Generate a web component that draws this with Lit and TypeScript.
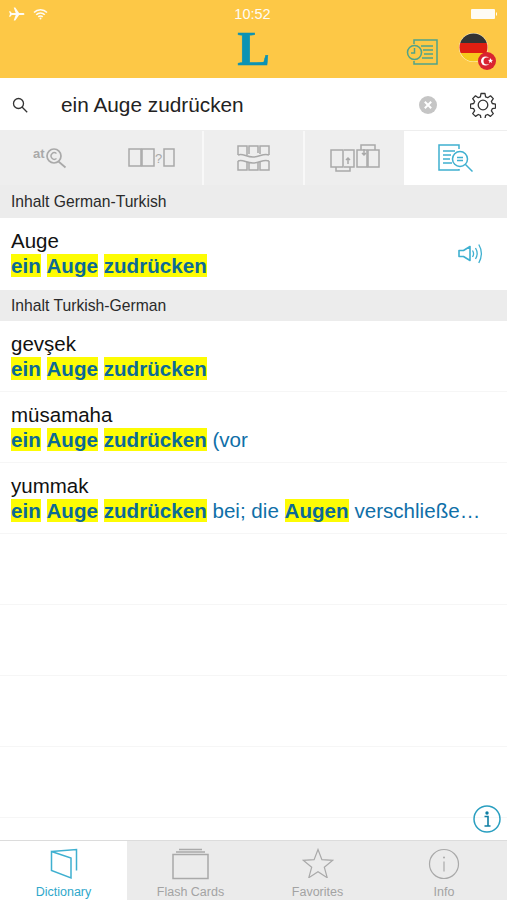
import { LitElement, html, css } from "lit";
import { customElement } from "lit/decorators.js";

const hl = (t: string) => html`<mark>${t}</mark>`;
const phrase = html`${hl("ein")} ${hl("Auge")} ${hl("zudrücken")}`;

const grey = "#a9a9a9";
const blue = "#3fb0d0";

const speaker = html`<svg width="26" height="26" viewBox="0 0 26 26" fill="none" stroke="${blue}" stroke-width="1.3">
  <path d="M1 9.5h4.5L12 5.5v14l-6.500-4H1z" stroke-linejoin="round" stroke-width="1.6"/>
  <path d="M14.500 9.500c1.300 2 1.300 4.500 0 6.500M17.500 7c2.100 3.500 2.100 7.500 0 11M20.800 3.500c3.200 5.500 3.200 12.500 0 18.500"/>
</svg>`;

const tabIcons = [
  html`<svg width="36" height="26" viewBox="0 0 36 26" fill="none" stroke="${grey}" stroke-width="1.700">
    <text x="0" y="13" font-family="Liberation Sans, sans-serif" font-size="13" font-weight="700" fill="${grey}" stroke="none">at</text>
    <circle cx="21" cy="11" r="7"/><path d="M25.500 16.500l7 6"/>
    <path d="M23.500 8.500a3.300 3.300 0 1 0 0 5" stroke-width="1.300"/>
  </svg>`,
  html`<svg width="48" height="22" viewBox="0 0 48 22" fill="none" stroke="${grey}" stroke-width="1.500">
    <rect x="1" y="2" width="12" height="17"/><rect x="14" y="2" width="12" height="17"/><rect x="36" y="2" width="10" height="17"/>
    <text x="27" y="16" font-family="Liberation Sans, sans-serif" font-size="13" fill="${grey}" stroke="none">?</text>
  </svg>`,
  html`<svg width="34" height="28" viewBox="0 0 34 28" fill="none" stroke="${grey}" stroke-width="1.500">
    <path d="M1 11V2h9v9M12 10V2h9v7M23 10V2h9v9M1 17v9h9v-8M12 18v8h9v-8M23 17v9h9v-9"/>
    <path d="M1 11c5-2 8 2 15 2s10-4 16-2M1 17c5-2 8 2 15 2s10-4 16-2"/>
  </svg>`,
  html`<svg width="50" height="28" viewBox="0 0 50 28" fill="none" stroke="${grey}" stroke-width="1.500">
    <rect x="1" y="6" width="12" height="17"/><path d="M14 6h10v17h-10M6 23v4h14v-4M18 20v-6m-2 2l2-2 2 2"/>
    <rect x="27" y="6" width="10" height="17"/><rect x="38" y="6" width="11" height="17"/>
    <path d="M31 6V1h14v5M34 5v6m-2-2l2 2 2-2"/>
  </svg>`,
  html`<svg width="36" height="28" viewBox="0 0 36 28" fill="none" stroke="${blue}" stroke-width="1.500">
    <path d="M21 5V1H1v25h20v-1"/><path d="M5 7h12M5 11h8M5 15h7M5 19h9" />
    <circle cx="22" cy="15" r="7.500"/><path d="M27.500 20.500l7 7"/><path d="M19 13.500h6M19 16.500h6"/>
  </svg>`,
];

const bottomTabs = [
  { label: "Dictionary", active: true, icon: html`<svg width="28" height="32" viewBox="0 0 28 32" fill="none" stroke="${blue}" stroke-width="1.500">
      <path d="M1.500 3.500L21 10v20L1.500 22.500zM1.500 3.500L26.500 1.500v21"/></svg>` },
  { label: "Flash Cards", icon: html`<svg width="38" height="32" viewBox="0 0 38 32" fill="none" stroke="${grey}" stroke-width="1.500">
      <rect x="1" y="6.500" width="35" height="24"/><path d="M4 4h29M7 1.500h23"/></svg>` },
  { label: "Favorites", icon: html`<svg width="32" height="30" viewBox="0 0 32 30" fill="none" stroke="${grey}" stroke-width="1.200">
      <path d="M16 1.500l3.900 10.200 10.900.6-8.500 6.900 2.900 10.500L16 23.700 6.800 29.700l2.900-10.500-8.500-6.900 10.900-.6z" stroke-linejoin="miter"/></svg>` },
  { label: "Info", icon: html`<svg width="32" height="32" viewBox="0 0 32 32" fill="none" stroke="${grey}" stroke-width="1.200">
      <circle cx="16" cy="16" r="14.500"/><circle cx="16" cy="9.500" r="1" fill="${grey}" stroke="none"/><path d="M16 13.500v10"/></svg>` },
];

const lines = [
  { head: "gevşek", body: html`${phrase}` },
  { head: "müsamaha", body: html`${phrase} (vor` },
  { head: "yummak", body: html`${phrase} bei; die ${hl("Augen")} verschließe…` },
];

@customElement("app-root")
export class AppRoot extends LitElement {
  static styles = css`
    :host { display: flex; flex-direction: column; width: 507px; height: 900px; position: relative; overflow: hidden; background: #fff; font-family: "Liberation Sans", Arial, sans-serif; color: #1a1a1a; }
    .top { background: #fdc846; height: 78px; box-sizing: border-box; display: flex; flex-direction: column; }
    .status { height: 27px; display: grid; grid-template-columns: 1fr auto 1fr; align-items: center; padding: 0 10px 0 8px; color: #fff; font-size: 14.500px; opacity: .95; }
    .status .l { display: flex; gap: 8px; align-items: center; }
    .status .r { justify-self: end; display: flex; }
    .nav { flex: 1; position: relative; display: flex; justify-content: center; }
    .logo { font-family: "Liberation Serif", serif; font-weight: 700; font-size: 49px; line-height: 1; color: #0c93b4; margin-top: -3px; -webkit-text-stroke: .5px #0c93b4; }
    .nav-right { position: absolute; right: 10px; top: 5px; display: flex; gap: 21px; align-items: flex-start; }
    .search { display: flex; align-items: center; padding: 1px 11px 0 12px; border-bottom: 1px solid #eeeeee; box-sizing: border-box; height: 53px; }
    .search .q { flex: 1; font-size: 20.800px; margin-left: 33px; color: #222; }
    .search .clear { margin-right: 33px; display: flex; }
    .tabs { height: 54px; display: grid; grid-template-columns: 101px 101px 101px 101px 103px; background: #eeeeee; }
    .tab { display: flex; align-items: center; justify-content: center; padding-bottom: 1px; }
    .tab.sep { border-left: 2px solid #f8f8f8; }
    .tab.on { background: #fff; }
    .sec { background: #ececec; font-size: 15.700px; padding-left: 11px; display: flex; align-items: center; color: #2a2a2a; }
    .sec.a { height: 33px; }
    .sec.t { height: 31px; }
    .row { display: flex; align-items: center; height: 71px; box-sizing: border-box; padding: 0 11px; border-bottom: 1px solid #f6f6f6; }
    .row.first { height: 72px; border-bottom: 0; padding-right: 23px; }
    .txt { flex: 1; min-width: 0; padding-top: 1px; }
    .first .txt { padding-top: 0; padding-bottom: 1px; }
    .h { font-size: 20.500px; line-height: 24px; color: #111; }
    .d { font-size: 20.600px; line-height: 26px; color: #0f6fa8; white-space: nowrap; }
    mark { background: #fdfc04; color: #0b6a96; font-weight: 700; padding: 0; }
    .list { flex: 1; min-height: 0; overflow: hidden; }
    .info { position: absolute; right: 6px; top: 805px; display: flex; }
    .bar { height: 60px; box-sizing: border-box; display: grid; grid-template-columns: 127px 127px 127px 126px; background: #ebebeb; border-top: 1px solid #dcdcdc; }
    .bt { display: flex; flex-direction: column; align-items: center; font-size: 12.500px; color: #a3a3a3; padding-top: 7px; position: relative; }
    .bt .ic { height: 35px; display: flex; align-items: flex-start; justify-content: center; }
    .bt.on { background: #fff; color: #2fa8cb; }
    .bt span { margin-top: 2px; }
  `;

  render() {
    return html`
      <div class="top">
        <div class="status">
          <div class="l">
            <svg width="17" height="14" viewBox="0 0 17 14" fill="#fff"><path d="M16.500 7c0-.7-.8-1.100-1.500-1.100h-3.900L7.300.5H5.700l2 5.400H3.800L2.300 4.200H1l1 2.800-1 2.800h1.300l1.500-1.700h3.900l-2 5.400h1.600l3.800-5.400H15c.7 0 1.500-.4 1.500-1.100z"/></svg>
            <svg width="15" height="12" viewBox="0 0 15 12" fill="none" stroke="#fff" stroke-width="1.600"><path d="M1 4.500a9 9 0 0 1 13 0M3.200 6.800a6 6 0 0 1 8.600 0M5.300 8.900a3 3 0 0 1 4.400 0"/><circle cx="7.500" cy="10.500" r="1" fill="#fff" stroke="none"/></svg>
          </div>
          <div>10:52</div>
          <div class="r"><svg width="26" height="12" viewBox="0 0 26 12" fill="#fff"><rect x="0" y="1" width="24" height="10" rx="1"/><rect x="25" y="4.500" width="1" height="3"/></svg></div>
        </div>
        <div class="nav">
          <div class="logo">L</div>
          <div class="nav-right">
            <svg width="32" height="30" viewBox="0 0 32 30" fill="none" stroke="#4fa38a" stroke-width="1.500" style="margin-top:7px">
              <path d="M8 5V1h23v24H8v-3"/><path d="M15 7h12M17 11h10M18 15h9M16 19h11"/>
              <circle cx="8.500" cy="13.500" r="7"/><path d="M8.500 9v5h-3.500"/>
            </svg>
            <svg width="38" height="38" viewBox="0 0 38 38" style="overflow:visible;margin-top:1px">
              <defs><clipPath id="fc"><circle cx="14.500" cy="14.500" r="14"/></clipPath></defs>
              <circle cx="14.500" cy="14.500" r="14.500" fill="#fff5cf"/>
              <g clip-path="url(#fc)">
                <rect x="0" y="0" width="29" height="10" fill="#333"/>
                <rect x="0" y="10" width="29" height="10" fill="#df1f12"/>
                <rect x="0" y="20" width="29" height="10" fill="#f6c81c"/>
              </g>
              <circle cx="28" cy="28" r="9" fill="#d92430"/>
              <circle cx="26.500" cy="28" r="4.500" fill="#fff"/>
              <circle cx="28" cy="28" r="3.500" fill="#d92430"/>
              <path d="M31.500 25l.7 1.800 1.900.1-1.500 1.200.5 1.800-1.600-1-1.600 1 .5-1.800-1.500-1.200 1.900-.1z" fill="#fff"/>
            </svg>
          </div>
        </div>
      </div>

      <div class="search">
        <svg width="16" height="16" viewBox="0 0 16 16" fill="none" stroke="#333" stroke-width="1.300"><circle cx="6.500" cy="6.500" r="5"/><path d="M10 10l5.200 5.200"/></svg>
        <div class="q">ein Auge zudrücken</div>
        <div class="clear"><svg width="18" height="18" viewBox="0 0 18 18"><circle cx="9" cy="9" r="9" fill="#c5c5c5"/><path d="M5.800 5.800l6.400 6.400M12.200 5.800l-6.400 6.400" stroke="#fff" stroke-width="2"/></svg></div>
        <svg width="26" height="26" viewBox="0 0 26 26" fill="none" stroke="#333" stroke-width="1.300" stroke-linejoin="round">
          <path d="M11 1.500h4l.6 3.300 2.100.9 2.800-1.900 2.800 2.800-1.900 2.800.9 2.100 3.200.6v4l-3.200.6-.9 2.100 1.900 2.800-2.800 2.800-2.800-1.900-2.100.9-.6 3.200h-4l-.6-3.200-2.100-.9-2.800 1.900-2.800-2.800 1.900-2.800-.9-2.100-3.200-.6v-4l3.200-.6.900-2.100-1.900-2.800 2.800-2.800 2.800 1.900 2.100-.9z"/>
          <circle cx="13" cy="13" r="4.800"/>
        </svg>
      </div>

      <div class="tabs">
        ${tabIcons.map((ic, i) => html`<div class="tab ${i === 2 || i === 3 ? "sep" : ""} ${i === 4 ? "on" : ""}">${ic}</div>`)}
      </div>

      <div class="list">
        <div class="sec a">Inhalt German-Turkish</div>
        <div class="row first">
          <div class="txt"><div class="h">Auge</div><div class="d">${phrase}</div></div>
          ${speaker}
        </div>
        <div class="sec t">Inhalt Turkish-German</div>
        ${lines.map(l => html`<div class="row"><div class="txt"><div class="h">${l.head}</div><div class="d">${l.body}</div></div></div>`)}
        <div class="row"></div>
        <div class="row"></div>
        <div class="row"></div>
        <div class="row"></div>
      </div>

      <div class="info">
        <svg width="28" height="28" viewBox="0 0 28 28" fill="none" stroke="#2a9fc0" stroke-width="1.500">
          <circle cx="14" cy="14" r="13"/>
          <circle cx="14" cy="8" r="1.700" fill="#0e7ea3" stroke="none"/>
          <path d="M11.500 11.500H15V20.500M11.500 21H17.500" stroke="#0e7ea3" stroke-width="1.600"/>
        </svg>
      </div>

      <div class="bar">
        ${bottomTabs.map(t => html`<div class="bt ${t.active ? "on" : ""}"><div class="ic">${t.icon}</div><span>${t.label}</span></div>`)}
      </div>
    `;
  }
}
